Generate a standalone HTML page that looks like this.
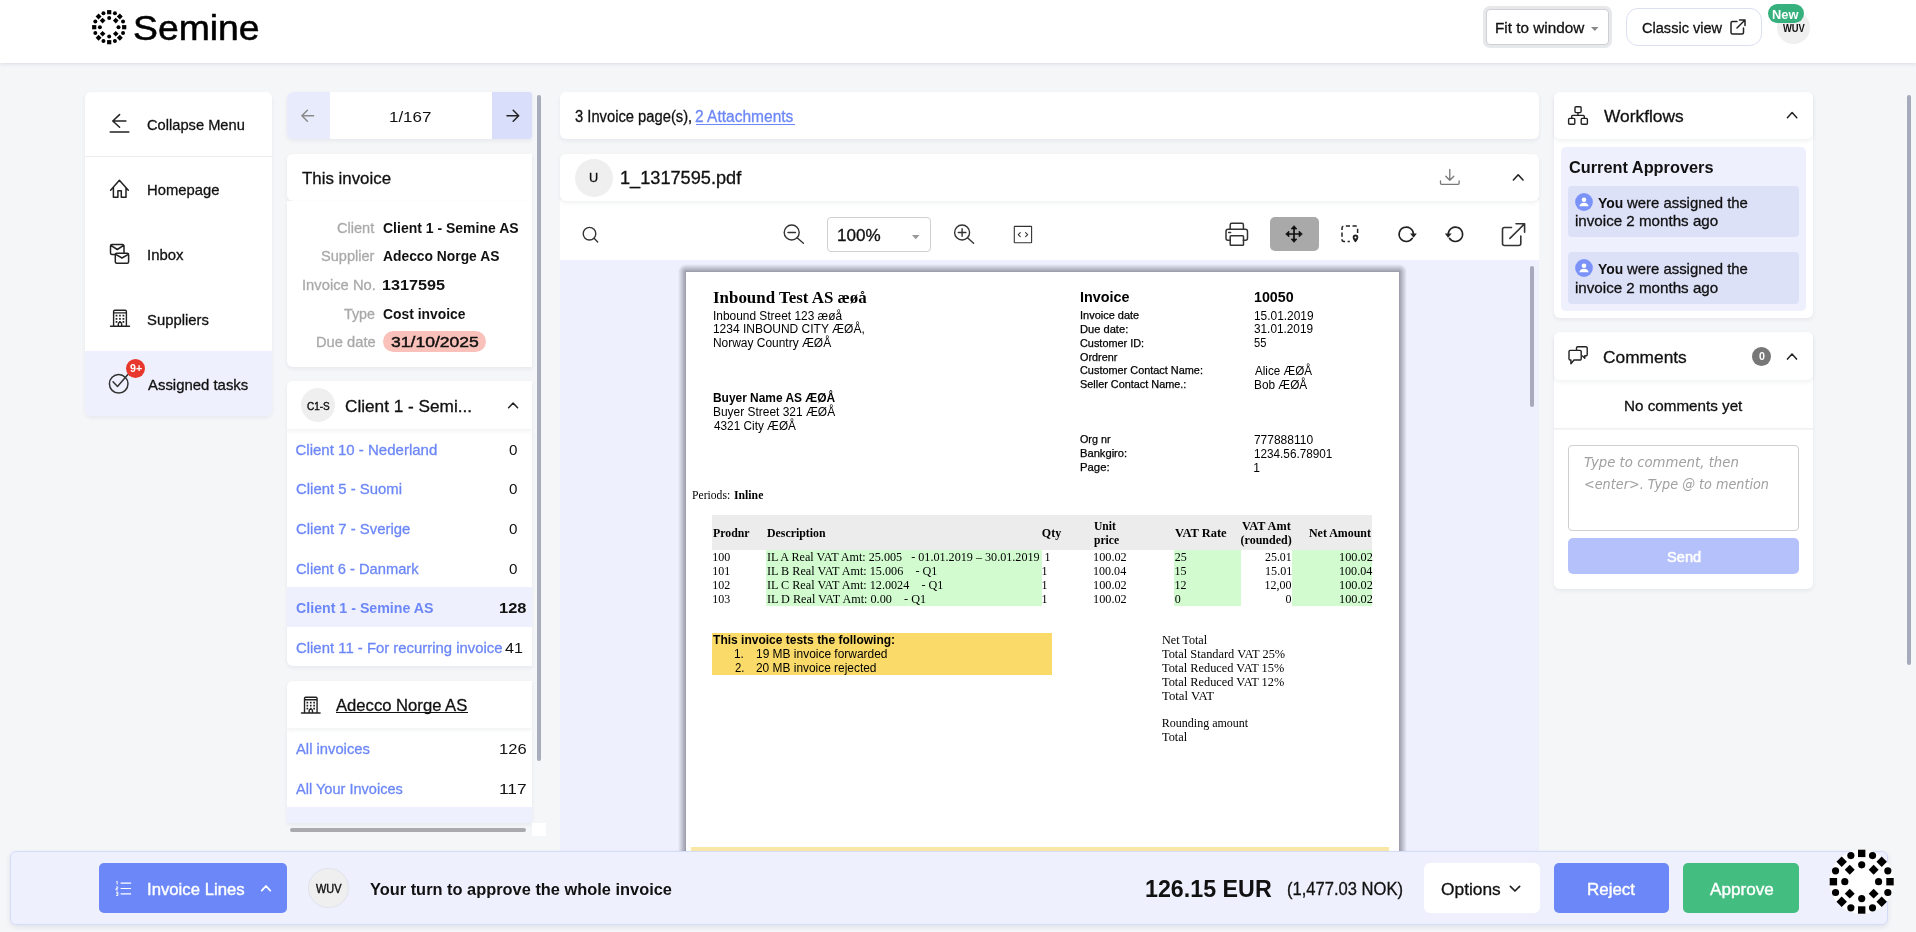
<!DOCTYPE html>
<html lang="en">
<head>
<meta charset="utf-8">
<title>Semine</title>
<style>
*{box-sizing:border-box;margin:0;padding:0}
html,body{width:1916px;height:932px;overflow:hidden}
body{position:relative;background:#f5f6f8;font-family:"Liberation Sans",sans-serif;color:#111;font-size:16px}
.abs{position:absolute}
.t{position:absolute;white-space:nowrap;line-height:1;transform-origin:0 0}
.card{position:absolute;background:#fff;border-radius:6px;box-shadow:0 2px 4px rgba(40,50,90,.07)}
svg{position:absolute;overflow:visible}
.ico{fill:none;stroke:#222;stroke-width:1.5;stroke-linecap:round;stroke-linejoin:round}
.lk{color:#6c87f7}
.u{-webkit-text-stroke:0.3px currentColor}
#root{position:absolute;left:0;top:0;width:1916px;height:932px;will-change:transform}
</style>
</head>
<body>
<div id="root">
<!-- header -->
<div class="abs" style="left:0px;top:0px;width:1916px;height:63px;background:#fff;box-shadow:0 1px 4px rgba(30,40,80,.13)"></div>
<svg style="left:89.8px;top:7.900000000000002px" width="38.4" height="38.4" viewBox="-19.2 -19.2 38.4 38.4" fill="#000"><rect x="-2.10" y="-2.10" width="4.2" height="4.2" transform="translate(0.00 -15.00) rotate(0.0)"/><circle cx="5.74" cy="-13.86" r="2.0"/><rect x="-2.10" y="-2.10" width="4.2" height="4.2" transform="translate(10.61 -10.61) rotate(45.0)"/><circle cx="13.86" cy="-5.74" r="2.0"/><rect x="-2.10" y="-2.10" width="4.2" height="4.2" transform="translate(15.00 -0.00) rotate(90.0)"/><circle cx="13.86" cy="5.74" r="2.0"/><rect x="-2.10" y="-2.10" width="4.2" height="4.2" transform="translate(10.61 10.61) rotate(135.0)"/><circle cx="5.74" cy="13.86" r="2.0"/><rect x="-2.10" y="-2.10" width="4.2" height="4.2" transform="translate(0.00 15.00) rotate(180.0)"/><circle cx="-5.74" cy="13.86" r="2.0"/><rect x="-2.10" y="-2.10" width="4.2" height="4.2" transform="translate(-10.61 10.61) rotate(225.0)"/><circle cx="-13.86" cy="5.74" r="2.0"/><rect x="-2.10" y="-2.10" width="4.2" height="4.2" transform="translate(-15.00 0.00) rotate(270.0)"/><circle cx="-13.86" cy="-5.74" r="2.0"/><rect x="-2.10" y="-2.10" width="4.2" height="4.2" transform="translate(-10.61 -10.61) rotate(315.0)"/><circle cx="-5.74" cy="-13.86" r="2.0"/><circle cx="0.00" cy="-9.30" r="2.0"/><rect x="-1.99" y="-1.99" width="3.99" height="3.99" transform="translate(6.58 -6.58) rotate(45)"/><circle cx="9.30" cy="-0.00" r="2.0"/><rect x="-1.99" y="-1.99" width="3.99" height="3.99" transform="translate(6.58 6.58) rotate(45)"/><circle cx="0.00" cy="9.30" r="2.0"/><rect x="-1.99" y="-1.99" width="3.99" height="3.99" transform="translate(-6.58 6.58) rotate(45)"/><circle cx="-9.30" cy="0.00" r="2.0"/><rect x="-1.99" y="-1.99" width="3.99" height="3.99" transform="translate(-6.58 -6.58) rotate(45)"/></svg>
<div class="t" style="left:132.8px;top:11px;font-size:35.5px;color:#000;transform:scaleX(1.0516);-webkit-text-stroke:0.55px #000;">Semine</div>
<div class="abs" style="left:1486px;top:9px;width:123px;height:36px;background:#fff;border:1px solid #cfcfd4;border-radius:4px;box-shadow:0 0 0 3px #e6e8ea"></div>
<div class="t u" style="left:1495.4px;top:20px;font-size:15.5px;transform:scaleX(0.9863);">Fit to window</div>
<svg style="left:1590.5px;top:26.5px" width="7.5" height="4"><path d="M0 0h7.5L3.75 4z" fill="#888"/></svg>
<div class="abs" style="left:1626px;top:8px;width:136px;height:38px;background:#fff;border:1px solid #dcdff0;border-radius:12px"></div>
<div class="t u" style="left:1641.5px;top:20px;font-size:15.5px;transform:scaleX(0.9395);">Classic view</div>
<svg class="ico" style="left:1730px;top:19px" width="16" height="16" viewBox="0 0 16 16"><path d="M7 2.5H2.5a1.5 1.5 0 0 0-1.5 1.5v9.5A1.5 1.5 0 0 0 2.5 15H12a1.5 1.5 0 0 0 1.5-1.5V9M9.5 1H15v5.5M15 1 7 9"/></svg>
<div class="abs" style="left:1777px;top:11.2px;width:32.8px;height:32.8px;background:#efefef;border-radius:50%"></div>
<div class="t" style="left:1782.7px;top:23px;font-size:11.5px;font-weight:700;transform:scaleX(0.8150);">WUV</div>
<div class="abs" style="left:1768px;top:4px;width:36px;height:19px;background:#36b07d;border-radius:10px"></div>
<div class="t" style="left:1772.4px;top:8px;font-size:13.5px;font-weight:700;color:#fff;transform:scaleX(0.9495);">New</div>
<!-- sidebar -->
<div class="card" style="left:85px;top:92px;width:187px;height:323.5px;overflow:hidden"><div class="abs" style="left:0;top:64px;width:187px;height:1px;background:#ececf0"></div><div class="abs" style="left:0;top:259px;width:187px;height:65px;background:#eef0fd"></div></div>
<div class="t u" style="left:147.1px;top:117px;font-size:15px;color:#111;transform:scaleX(0.9776);">Collapse Menu</div>
<div class="t u" style="left:146.6px;top:182px;font-size:15px;color:#111;transform:scaleX(0.9860);">Homepage</div>
<div class="t u" style="left:146.6px;top:247px;font-size:15px;color:#111;transform:scaleX(0.9937);">Inbox</div>
<div class="t u" style="left:147.3px;top:312px;font-size:15px;color:#111;transform:scaleX(0.9887);">Suppliers</div>
<div class="t u" style="left:147.8px;top:377px;font-size:15px;color:#111;transform:scaleX(0.9939);">Assigned tasks</div>
<svg class="ico" style="left:100px;top:105px" width="40" height="40" viewBox="100 105 40 40"><path d="M125.9 121h-13.2M119.6 114.6l-6.8 6.4 6.8 6.3M110.2 132h18.6"/></svg>
<svg class="ico" style="left:100px;top:170px" width="40" height="40" viewBox="100 170 40 40"><path d="M110.6 190.3l8.8-10 8.9 10M113.4 187.6v9.6h4.5v-6.5h3.4v6.5h4.7v-9.6"/></svg>
<svg class="ico" style="left:100px;top:235px" width="40" height="40" viewBox="100 235 40 40"><path d="M115 254.6h-3a1.5 1.5 0 0 1-1.5-1.5v-7a1.5 1.5 0 0 1 1.5-1.5h10.500a1.500 1.500 0 0 1 1.500 1.500v6.500M110.800 245.300l6.500 4.200 6.400-4.200"/><rect x="115.300" y="253.300" width="13.300" height="10" rx="1.500"/><path d="M115.600 254.300l6.400 3.700 6.300-3.700"/></svg>
<svg class="ico" style="left:109.6px;top:308px;stroke-width:1.40;" width="20.0" height="20.0" viewBox="0 0 20 20"><path d="M0.500 18.300h19M3.600 18.300v-14.800a1.200 1.200 0 0 1 1.200-1.200h10.400a1.200 1.200 0 0 1 1.200 1.200v14.800M3.600 4.900h12.800M8.300 18.300v-2.200a1.700 1.700 0 0 1 3.400 0v2.200"/><path stroke-width="1.70" stroke-linecap="butt" stroke-dasharray="1.700 1.750" d="M5.650 7.700h9M5.650 10.800h9M5.650 13.900h9"/></svg>
<svg class="ico" style="left:100px;top:355px;stroke:#333" width="40" height="40" viewBox="100 355 40 40"><circle cx="118.700" cy="383.800" r="9.300"/><path d="M113 381.700l4.500 4.700 10.800-12.300"/></svg>
<div class="abs" style="left:126px;top:359px;width:19px;height:19px;background:#e8382d;border-radius:50%"></div>
<div class="t" style="left:129.7px;top:363px;font-size:11.5px;font-weight:700;color:#fff;transform:scaleX(0.9280);">9+</div>
<!-- left column -->
<div class="card" style="left:287px;top:92px;width:245px;height:47px;overflow:hidden;border-radius:6px 3px 3px 6px"><div class="abs" style="left:0;top:0;width:42.5px;height:47px;background:#e8ebfc"></div><div class="abs" style="left:204.500px;top:0;width:40px;height:47px;background:#d9defa"></div></div>
<svg class="ico" style="left:295px;top:105px;stroke:#8a8a8a" width="24" height="22" viewBox="295 105 24 22"><path d="M313.600 115.800h-11.300M307.400 110.300l-5.500 5.500 5.500 5.500"/></svg>
<svg class="ico" style="left:500px;top:105px;stroke:#222" width="24" height="22" viewBox="500 105 24 22"><path d="M507 115.800h11.300M513.200 110.300l5.500 5.500-5.500 5.500"/></svg>
<div class="t" style="left:389.1px;top:109px;font-size:15px;transform:scaleX(1.1281);-webkit-text-stroke:0;">1/167</div>
<div class="card" style="left:287px;top:154px;width:245px;height:47px;border-radius:6px 0 0 6px"></div>
<div class="t u" style="left:301.5px;top:170px;font-size:16.5px;transform:scaleX(1.0222);">This invoice</div>
<div class="card" style="left:287px;top:201px;width:245px;height:165.5px;border-radius:0 0 0 6px"></div>
<div class="t u" style="left:337.3px;top:220px;font-size:15px;color:#a9a9a9;transform:scaleX(0.9709);">Client</div>
<div class="t" style="left:382.9px;top:220px;font-size:15px;font-weight:700;transform:scaleX(0.9331);">Client 1 - Semine AS</div>
<div class="t u" style="left:321.2px;top:248px;font-size:15px;color:#a9a9a9;transform:scaleX(0.9708);">Supplier</div>
<div class="t" style="left:383.1px;top:248px;font-size:15px;font-weight:700;transform:scaleX(0.9225);">Adecco Norge AS</div>
<div class="t u" style="left:302.0px;top:277px;font-size:15px;color:#a9a9a9;transform:scaleX(0.9847);">Invoice No.</div>
<div class="t" style="left:382.3px;top:277px;font-size:15px;font-weight:700;transform:scaleX(1.0791);">1317595</div>
<div class="t u" style="left:344.2px;top:306px;font-size:15px;color:#a9a9a9;transform:scaleX(0.9534);">Type</div>
<div class="t" style="left:382.9px;top:306px;font-size:15px;font-weight:700;transform:scaleX(0.9248);">Cost invoice</div>
<div class="t u" style="left:315.6px;top:334px;font-size:15px;color:#a9a9a9;transform:scaleX(0.9797);">Due date</div>
<div class="abs" style="left:383px;top:331px;width:103px;height:21px;background:#f9c1ba;border-radius:10.500px"></div>
<div class="t" style="left:390.5px;top:334px;font-size:15px;transform:scaleX(1.1703);-webkit-text-stroke:0.45px #111;">31/10/2025</div>
<div class="card" style="left:287px;top:381px;width:245px;height:48px;border-radius:6px 0 0 0;z-index:2"></div>
<div class="abs" style="left:300.5px;top:388px;width:34px;height:34px;background:#efefef;border-radius:50%;z-index:2"></div>
<div class="t" style="left:306.7px;top:401px;font-size:10.5px;transform:scaleX(0.9478);z-index:2;-webkit-text-stroke:0.4px #111;">C1-S</div>
<div class="t u" style="left:345.1px;top:398px;font-size:16.5px;transform:scaleX(1.0419);z-index:2;">Client 1 - Semi...</div>
<svg class="ico" style="left:506px;top:400px;z-index:2" width="14" height="10" viewBox="0 0 14 10"><path d="M2.600 7.800l4.500-4.700 4.500 4.700"/></svg>
<div class="card" style="left:287px;top:429px;width:245px;height:237px;border-radius:0 0 0 6px"><div class="abs" style="left:0;top:158px;width:244.500px;height:39.700px;background:#eef0fd"></div></div>
<div class="t u" style="left:295.5px;top:442px;font-size:15px;color:#6c87f7;">Client 10 - Nederland</div>
<div class="t" style="left:508.5px;top:442px;font-size:15.5px;transform:scaleX(0.9806);-webkit-text-stroke:0;">0</div>
<div class="t u" style="left:295.5px;top:481px;font-size:15px;color:#6c87f7;transform:scaleX(0.9941);">Client 5 - Suomi</div>
<div class="t" style="left:508.5px;top:481px;font-size:15.5px;transform:scaleX(0.9806);-webkit-text-stroke:0;">0</div>
<div class="t u" style="left:295.5px;top:521px;font-size:15px;color:#6c87f7;transform:scaleX(0.9935);">Client 7 - Sverige</div>
<div class="t" style="left:508.5px;top:521px;font-size:15.5px;transform:scaleX(0.9806);-webkit-text-stroke:0;">0</div>
<div class="t u" style="left:295.5px;top:561px;font-size:15px;color:#6c87f7;transform:scaleX(0.9802);">Client 6 - Danmark</div>
<div class="t" style="left:508.5px;top:561px;font-size:15.5px;transform:scaleX(0.9806);-webkit-text-stroke:0;">0</div>
<div class="t" style="left:295.8px;top:600px;font-size:15px;font-weight:700;color:#6c87f7;transform:scaleX(0.9462);">Client 1 - Semine AS</div>
<div class="t" style="left:499.0px;top:600px;font-size:15.5px;font-weight:700;transform:scaleX(1.0609);">128</div>
<div class="t u" style="left:295.5px;top:640px;font-size:15px;color:#6c87f7;transform:scaleX(0.9926);">Client 11 - For recurring invoice</div>
<div class="t" style="left:504.7px;top:640px;font-size:15.5px;transform:scaleX(1.0385);-webkit-text-stroke:0;">41</div>
<div class="card" style="left:287px;top:681px;width:245px;height:47px;border-radius:6px 0 0 0;z-index:2"></div>
<svg class="ico" style="left:301px;top:694.5px;stroke-width:1.43;z-index:2;" width="19.6" height="19.6" viewBox="0 0 20 20"><path d="M0.500 18.300h19M3.600 18.300v-14.800a1.200 1.200 0 0 1 1.200-1.200h10.400a1.200 1.200 0 0 1 1.200 1.200v14.800M3.600 4.900h12.800M8.300 18.300v-2.200a1.700 1.700 0 0 1 3.400 0v2.200"/><path stroke-width="1.73" stroke-linecap="butt" stroke-dasharray="1.700 1.750" d="M5.650 7.700h9M5.650 10.800h9M5.650 13.900h9"/></svg>
<!-- z -->
<div class="t u" style="left:336.2px;top:697px;font-size:16.5px;transform:scaleX(1.0080);z-index:2;">Adecco Norge AS</div>
<div class="abs" style="left:335.5px;top:712.3px;width:132.8px;height:1.2px;background:#111;z-index:2"></div>
<div class="card" style="left:287px;top:728px;width:245px;height:95px;border-radius:0;overflow:hidden"><div class="abs" style="left:0;top:79px;width:244.500px;height:16px;background:#eef0fd"></div></div>
<div class="t u" style="left:296.2px;top:741px;font-size:15px;color:#6c87f7;transform:scaleX(0.9844);">All invoices</div>
<div class="t" style="left:499.0px;top:741px;font-size:15.5px;transform:scaleX(1.0674);-webkit-text-stroke:0;">126</div>
<div class="t u" style="left:296.2px;top:781px;font-size:15px;color:#6c87f7;transform:scaleX(0.9702);">All Your Invoices</div>
<div class="t" style="left:498.9px;top:781px;font-size:15.5px;transform:scaleX(1.1205);-webkit-text-stroke:0;">117</div>
<div class="abs" style="left:537.2px;top:94.5px;width:3.6px;height:666px;background:#a9acbb;border-radius:2px"></div>
<div class="abs" style="left:290px;top:827.8px;width:236px;height:4.2px;background:#a9a9ae;border-radius:2px"></div>
<div class="abs" style="left:532px;top:822.8px;width:14px;height:13.6px;background:#fff"></div>
<!-- center -->
<div class="card" style="left:560px;top:92px;width:979px;height:47px;"></div>
<div class="t u" style="left:575.1px;top:109px;font-size:16px;transform:scaleX(0.9212);">3 Invoice page(s),</div>
<div class="t u" style="left:695.3px;top:109px;font-size:16px;color:#6c87f7;transform:scaleX(0.9701);">2 Attachments</div>
<div class="abs" style="left:695.5px;top:123.5px;width:99px;height:1px;background:#6c87f7"></div>
<div class="abs" style="left:560px;top:200px;width:979px;height:651px;background:#fff"></div>
<div class="abs" style="left:560px;top:260px;width:979px;height:591px;background:#eef0fd"></div>
<div class="card" style="left:560px;top:154px;width:979px;height:47px;"></div>
<div class="abs" style="left:575px;top:158.5px;width:38px;height:38px;background:#efefef;border-radius:50%"></div>
<div class="t u" style="left:589.2px;top:172px;font-size:12.5px;transform:scaleX(1.0140);">U</div>
<div class="t u" style="left:620.0px;top:170px;font-size:17.5px;transform:scaleX(1.0376);">1_1317595.pdf</div>
<svg class="ico" style="left:1438px;top:165px;stroke:#777;stroke-width:1.3" width="24" height="24" viewBox="1438 165 24 24"><path d="M1449.800 169.500v10.500M1445.800 176.300l4 4 4-4M1440.500 180.800v2.500a1 1 0 0 0 1 1h16.600a1 1 0 0 0 1-1v-2.500"/></svg>
<svg class="ico" style="left:1510.500px;top:172px;stroke-width:1.6" width="14" height="10" viewBox="0 0 14 10"><path d="M2.400 8l4.800-5.200 4.800 5.200"/></svg>
<svg class="ico" style="left:580px;top:224px;stroke:#333;stroke-width:1.4" width="20" height="20" viewBox="580 224 20 20"><circle cx="589.500" cy="233.700" r="6.300"/><path d="M594.100 238.300l3.600 3.600"/></svg>
<svg class="ico" style="left:782px;top:222px;stroke:#333;stroke-width:1.4" width="24" height="24" viewBox="782 222 24 24"><circle cx="791.700" cy="232.500" r="7.500"/><path d="M797.100 237.800l6.300 5.500M788 232.500h7.500"/></svg>
<div class="abs" style="left:827.2px;top:217.2px;width:103.8px;height:34.6px;background:#fff;border:1px solid #d0d0d0;border-radius:4px"></div>
<div class="t u" style="left:837.0px;top:228px;font-size:16px;transform:scaleX(1.0673);">100%</div>
<svg style="left:912px;top:234.500px" width="7.500" height="4.300"><path d="M0 0h7.500L3.750 4.300z" fill="#999"/></svg>
<svg class="ico" style="left:952px;top:222px;stroke:#333;stroke-width:1.4" width="24" height="24" viewBox="952 222 24 24"><circle cx="962.100" cy="232.500" r="7.500"/><path d="M967.500 237.800l6.100 5.500M958.300 232.500h7.600M962.100 228.700v7.600"/></svg>
<svg class="ico" style="left:1012px;top:224px;stroke:#333;stroke-width:1.100" width="22" height="20" viewBox="1012 224 22 20"><rect x="1014.300" y="226.400" width="17.300" height="16.300" rx="0.500"/><path d="M1020.300 232.600l-2.100 2 2.100 2M1025.600 232.600l2.100 2-2.100 2"/></svg>
<svg class="ico" style="left:1222px;top:220px;stroke:#333;stroke-width:1.500" width="28" height="28" viewBox="1222 220 28 28"><path d="M1230.200 229.300v-4.600a1.500 1.500 0 0 1 1.500-1.500h10.200a1.500 1.500 0 0 1 1.500 1.500v4.600M1230.200 240.300h-2.200a2 2 0 0 1-2-2v-6.800a2.200 2.200 0 0 1 2.200-2.200h17.100a2.200 2.200 0 0 1 2.200 2.200v6.800a2 2 0 0 1-2 2h-2.200M1228.600 232.400h2"/><rect x="1230.200" y="235.800" width="13.300" height="9.500" rx="0.800"/></svg>
<div class="abs" style="left:1270px;top:217px;width:49px;height:34px;background:#a9a9a9;border-radius:5px"></div>
<svg style="left:1284px;top:224px" width="20" height="20" viewBox="-10 -10 20 20" fill="none" stroke="#111" stroke-width="1.700"><path d="M-6.300 0h12.600M0 -6.300v12.600"/><path fill="#111" stroke-width="0.600" stroke-linejoin="round" d="M0 -8.400l3 3.400h-6zM0 8.400l3-3.400h-6zM-8.400 0l3.400-3v6zM8.400 0l-3.400-3v6z"/></svg>
<svg style="left:1338px;top:222px" width="24" height="24" viewBox="1338 222 24 24" fill="none" stroke="#222" stroke-width="1.500"><path d="M1349.800 241.400h-6a1.800 1.800 0 0 1-1.800-1.800v-11.700a1.800 1.800 0 0 1 1.800-1.800h12a1.800 1.800 0 0 1 1.800 1.800v5.600" stroke-dasharray="4.200 2.500" stroke-dashoffset="2"/><path fill="#222" stroke="none" d="M1355.500 234.600a2.800 2.800 0 0 0-2.800 2.800c0 2.100 2.800 5 2.800 5s2.800-2.900 2.800-5a2.800 2.800 0 0 0-2.800-2.800zm0 3.800a1 1 0 1 1 0-2 1 1 0 0 1 0 2z"/></svg>
<svg style="left:1394px;top:222px" width="24" height="24" viewBox="1394 222 24 24" fill="none" stroke="#222" stroke-width="1.600" stroke-linecap="round"><path d="M1412.300 238.300a7.200 7.200 0 1 1 1.200-4.200"/><path fill="#222" stroke="none" d="M1410 233.600h6.800l-3.200 4.200z"/></svg>
<svg style="left:1443px;top:222px" width="24" height="24" viewBox="1443 222 24 24" fill="none" stroke="#222" stroke-width="1.600" stroke-linecap="round"><path d="M1449.400 238.300a7.200 7.200 0 1 0-1.200-4.200"/><path fill="#222" stroke="none" d="M1451.700 233.600h-6.800l3.200 4.200z"/></svg>
<svg class="ico" style="left:1500px;top:220px;stroke:#333;stroke-width:1.600" width="28" height="28" viewBox="1500 220 28 28"><path d="M1511.500 227.500h-7a2 2 0 0 0-2 2v14a2 2 0 0 0 2 2h14.300a2 2 0 0 0 2-2v-7.500M1516 223.700h8.600v8.600M1524.400 223.900l-14.500 14.500"/></svg>
<div class="abs" style="left:1530.2px;top:266px;width:3.5px;height:141px;background:#a7aaba;border-radius:2px"></div>
<!-- pdf page -->
<div class="abs" style="left:560px;top:260px;width:979px;height:591px;overflow:hidden">
<div class="abs" style="left:126px;top:11.8px;width:713.2px;height:700px;background:#fff"></div>
<div class="abs" style="left:118px;top:11.8px;width:8px;height:700px;background:linear-gradient(to left,rgba(0,0,15,.36),rgba(0,0,15,0))"></div>
<div class="abs" style="left:839.2px;top:11.8px;width:8px;height:700px;background:linear-gradient(to right,rgba(0,0,15,.36),rgba(0,0,15,0))"></div>
<div class="abs" style="left:126px;top:3.8000000000000007px;width:713.2px;height:8px;background:linear-gradient(to top,rgba(0,0,15,.36),rgba(0,0,15,0))"></div>
<div class="abs" style="left:118px;top:3.8000000000000007px;width:8px;height:8px;background:radial-gradient(circle at 100% 100%,rgba(0,0,15,.36),rgba(0,0,15,0) 8px)"></div>
<div class="abs" style="left:839.2px;top:3.8000000000000007px;width:8px;height:8px;background:radial-gradient(circle at 0 100%,rgba(0,0,15,.36),rgba(0,0,15,0) 8px)"></div>
</div>
<div class="t pdf" style="left:713.3px;top:290px;font-size:16.5px;font-weight:700;color:#000;font-family:'Liberation Serif',serif;transform:scaleX(1.0249);">Inbound Test AS æøå</div>
<div class="t pdf" style="left:712.7px;top:310px;font-size:12px;color:#000;transform:scaleX(0.9920);">Inbound Street 123 æøå</div>
<div class="t pdf" style="left:712.9px;top:323px;font-size:12px;color:#000;">1234 INBOUND CITY ÆØÅ,</div>
<div class="t pdf" style="left:712.8px;top:337px;font-size:12px;color:#000;transform:scaleX(0.9952);">Norway Country ÆØÅ</div>
<div class="t pdf" style="left:713.0px;top:392px;font-size:12px;font-weight:700;color:#000;transform:scaleX(0.9937);">Buyer Name AS ÆØÅ</div>
<div class="t pdf" style="left:712.8px;top:406px;font-size:12px;color:#000;transform:scaleX(0.9951);">Buyer Street 321 ÆØÅ</div>
<div class="t pdf" style="left:713.5px;top:420px;font-size:12px;color:#000;transform:scaleX(0.9828);">4321 City ÆØÅ</div>
<div class="t pdf" style="left:1079.8px;top:290px;font-size:14.5px;font-weight:700;color:#000;transform:scaleX(0.9919);">Invoice</div>
<div class="t pdf" style="left:1253.6px;top:290px;font-size:14.5px;font-weight:700;color:#000;transform:scaleX(0.9838);">10050</div>
<div class="t pdf" style="left:1079.6px;top:310px;font-size:10.5px;color:#000;transform:scaleX(1.0459);-webkit-text-stroke:0.25px #000;">Invoice date</div>
<div class="t pdf" style="left:1079.7px;top:324px;font-size:10.5px;color:#000;transform:scaleX(1.0595);-webkit-text-stroke:0.25px #000;">Due date:</div>
<div class="t pdf" style="left:1080.1px;top:338px;font-size:10.5px;color:#000;transform:scaleX(1.0371);-webkit-text-stroke:0.25px #000;">Customer ID:</div>
<div class="t pdf" style="left:1080.2px;top:352px;font-size:10.5px;color:#000;transform:scaleX(1.0307);-webkit-text-stroke:0.25px #000;">Ordrenr</div>
<div class="t pdf" style="left:1080.1px;top:365px;font-size:10.5px;color:#000;transform:scaleX(1.0378);-webkit-text-stroke:0.25px #000;">Customer Contact Name:</div>
<div class="t pdf" style="left:1080.1px;top:379px;font-size:10.5px;color:#000;transform:scaleX(1.0358);-webkit-text-stroke:0.25px #000;">Seller Contact Name.:</div>
<div class="t pdf" style="left:1080.2px;top:434px;font-size:10.5px;color:#000;transform:scaleX(1.0243);-webkit-text-stroke:0.25px #000;">Org nr</div>
<div class="t pdf" style="left:1079.7px;top:448px;font-size:10.5px;color:#000;transform:scaleX(1.0629);-webkit-text-stroke:0.25px #000;">Bankgiro:</div>
<div class="t pdf" style="left:1079.7px;top:462px;font-size:10.5px;color:#000;transform:scaleX(1.0778);-webkit-text-stroke:0.25px #000;">Page:</div>
<div class="t pdf" style="left:1253.6px;top:310px;font-size:12px;color:#000;transform:scaleX(0.9905);">15.01.2019</div>
<div class="t pdf" style="left:1254.0px;top:323px;font-size:12px;color:#000;transform:scaleX(0.9830);">31.01.2019</div>
<div class="t pdf" style="left:1254.0px;top:337px;font-size:12px;color:#000;transform:scaleX(0.9240);">55</div>
<div class="t pdf" style="left:1254.5px;top:365px;font-size:12px;color:#000;transform:scaleX(0.9711);">Alice ÆØÅ</div>
<div class="t pdf" style="left:1253.5px;top:379px;font-size:12px;color:#000;transform:scaleX(0.9851);">Bob ÆØÅ</div>
<div class="t pdf" style="left:1253.9px;top:434px;font-size:12px;color:#000;">777888110</div>
<div class="t pdf" style="left:1253.6px;top:448px;font-size:12px;color:#000;transform:scaleX(0.9780);">1234.56.78901</div>
<div class="t pdf" style="left:1253.2px;top:462px;font-size:12px;color:#000;">1</div>
<div class="t pdf" style="left:691.9px;top:489px;font-size:12px;color:#000;font-family:'Liberation Serif',serif;transform:scaleX(0.9706);">Periods:</div>
<div class="t pdf" style="left:734.3px;top:489px;font-size:12px;font-weight:700;color:#000;font-family:'Liberation Serif',serif;transform:scaleX(0.9777);">Inline</div>
<div class="abs" style="left:712.2px;top:515.4px;width:660px;height:34.6px;background:#ececec"></div>
<div class="abs" style="left:766px;top:550px;width:276.1px;height:55.8px;background:#d2fcd0"></div>
<div class="abs" style="left:1174px;top:550px;width:66.7px;height:55.8px;background:#d2fcd0"></div>
<div class="abs" style="left:1291.8px;top:550px;width:80.4px;height:55.8px;background:#d2fcd0"></div>
<div class="t pdf" style="left:712.7px;top:527px;font-size:12px;font-weight:700;color:#000;font-family:'Liberation Serif',serif;transform:scaleX(0.9835);">Prodnr</div>
<div class="t pdf" style="left:766.7px;top:527px;font-size:12px;font-weight:700;color:#000;font-family:'Liberation Serif',serif;transform:scaleX(0.9886);">Description</div>
<div class="t pdf" style="left:1041.8px;top:527px;font-size:12px;font-weight:700;color:#000;font-family:'Liberation Serif',serif;">Qty</div>
<div class="t pdf" style="left:1093.5px;top:520px;font-size:12px;font-weight:700;color:#000;font-family:'Liberation Serif',serif;transform:scaleX(0.9645);">Unit</div>
<div class="t pdf" style="left:1093.6px;top:534px;font-size:12px;font-weight:700;color:#000;font-family:'Liberation Serif',serif;transform:scaleX(0.9656);">price</div>
<div class="t pdf" style="left:1174.9px;top:527px;font-size:12px;font-weight:700;color:#000;font-family:'Liberation Serif',serif;transform:scaleX(1.0398);">VAT Rate</div>
<div class="t pdf" style="left:1241.6px;top:520px;font-size:12px;font-weight:700;color:#000;font-family:'Liberation Serif',serif;transform:scaleX(1.0221);">VAT Amt</div>
<div class="t pdf" style="left:1240.6px;top:534px;font-size:12px;font-weight:700;color:#000;font-family:'Liberation Serif',serif;">(rounded)</div>
<div class="t pdf" style="left:1309.3px;top:527px;font-size:12px;font-weight:700;color:#000;font-family:'Liberation Serif',serif;transform:scaleX(0.9941);">Net Amount</div>
<div class="t pdf" style="left:712.2px;top:551px;font-size:12px;color:#000;font-family:'Liberation Serif',serif;">100</div>
<div class="t pdf" style="left:766.5px;top:551px;font-size:12px;color:#000;font-family:'Liberation Serif',serif;transform:scaleX(1.0114);white-space:pre;">IL A Real VAT Amt: 25.005   - 01.01.2019 – 30.01.2019</div>
<div class="t pdf" style="left:1044.4px;top:551px;font-size:12px;color:#000;font-family:'Liberation Serif',serif;">1</div>
<div class="t pdf" style="left:1092.9px;top:551px;font-size:12px;color:#000;font-family:'Liberation Serif',serif;transform:scaleX(1.0217);">100.02</div>
<div class="t pdf" style="left:1174.8px;top:551px;font-size:12px;color:#000;font-family:'Liberation Serif',serif;">25</div>
<div class="t pdf" style="left:1265.2px;top:551px;font-size:12px;color:#000;font-family:'Liberation Serif',serif;transform:scaleX(0.9915);">25.01</div>
<div class="t pdf" style="left:1338.5px;top:551px;font-size:12px;color:#000;font-family:'Liberation Serif',serif;transform:scaleX(1.0249);">100.02</div>
<div class="t pdf" style="left:712.3px;top:565px;font-size:12px;color:#000;font-family:'Liberation Serif',serif;">101</div>
<div class="t pdf" style="left:766.5px;top:565px;font-size:12px;color:#000;font-family:'Liberation Serif',serif;transform:scaleX(1.0151);white-space:pre;">IL B Real VAT Amt: 15.006    - Q1</div>
<div class="t pdf" style="left:1041.5px;top:565px;font-size:12px;color:#000;font-family:'Liberation Serif',serif;">1</div>
<div class="t pdf" style="left:1092.9px;top:565px;font-size:12px;color:#000;font-family:'Liberation Serif',serif;transform:scaleX(1.0057);">100.04</div>
<div class="t pdf" style="left:1174.5px;top:565px;font-size:12px;color:#000;font-family:'Liberation Serif',serif;">15</div>
<div class="t pdf" style="left:1264.6px;top:565px;font-size:12px;color:#000;font-family:'Liberation Serif',serif;transform:scaleX(1.0131);">15.01</div>
<div class="t pdf" style="left:1338.5px;top:565px;font-size:12px;color:#000;font-family:'Liberation Serif',serif;transform:scaleX(1.0088);">100.04</div>
<div class="t pdf" style="left:712.3px;top:579px;font-size:12px;color:#000;font-family:'Liberation Serif',serif;">102</div>
<div class="t pdf" style="left:766.5px;top:579px;font-size:12px;color:#000;font-family:'Liberation Serif',serif;transform:scaleX(1.0146);white-space:pre;">IL C Real VAT Amt: 12.0024    - Q1</div>
<div class="t pdf" style="left:1041.5px;top:579px;font-size:12px;color:#000;font-family:'Liberation Serif',serif;">1</div>
<div class="t pdf" style="left:1092.9px;top:579px;font-size:12px;color:#000;font-family:'Liberation Serif',serif;transform:scaleX(1.0217);">100.02</div>
<div class="t pdf" style="left:1174.6px;top:579px;font-size:12px;color:#000;font-family:'Liberation Serif',serif;">12</div>
<div class="t pdf" style="left:1264.6px;top:579px;font-size:12px;color:#000;font-family:'Liberation Serif',serif;">12,00</div>
<div class="t pdf" style="left:1338.5px;top:579px;font-size:12px;color:#000;font-family:'Liberation Serif',serif;transform:scaleX(1.0249);">100.02</div>
<div class="t pdf" style="left:712.2px;top:593px;font-size:12px;color:#000;font-family:'Liberation Serif',serif;">103</div>
<div class="t pdf" style="left:766.5px;top:593px;font-size:12px;color:#000;font-family:'Liberation Serif',serif;transform:scaleX(1.0158);white-space:pre;">IL D Real VAT Amt: 0.00    - Q1</div>
<div class="t pdf" style="left:1041.5px;top:593px;font-size:12px;color:#000;font-family:'Liberation Serif',serif;">1</div>
<div class="t pdf" style="left:1092.9px;top:593px;font-size:12px;color:#000;font-family:'Liberation Serif',serif;transform:scaleX(1.0217);">100.02</div>
<div class="t pdf" style="left:1174.7px;top:593px;font-size:12px;color:#000;font-family:'Liberation Serif',serif;">0</div>
<div class="t pdf" style="left:1285.5px;top:593px;font-size:12px;color:#000;font-family:'Liberation Serif',serif;">0</div>
<div class="t pdf" style="left:1338.5px;top:593px;font-size:12px;color:#000;font-family:'Liberation Serif',serif;transform:scaleX(1.0249);">100.02</div>
<div class="abs" style="left:712.2px;top:633.2px;width:340.1px;height:41.6px;background:#fadb6a"></div>
<div class="t pdf" style="left:713.1px;top:634px;font-size:12px;font-weight:700;color:#000;">This invoice tests the following:</div>
<div class="t pdf" style="left:734.4px;top:648px;font-size:12px;color:#000;transform:scaleX(0.9821);">1.</div>
<div class="t pdf" style="left:755.9px;top:648px;font-size:12px;color:#000;transform:scaleX(0.9957);">19 MB invoice forwarded</div>
<div class="t pdf" style="left:734.7px;top:662px;font-size:12px;color:#000;transform:scaleX(0.9467);">2.</div>
<div class="t pdf" style="left:756.2px;top:662px;font-size:12px;color:#000;transform:scaleX(0.9926);">20 MB invoice rejected</div>
<div class="t pdf" style="left:1161.8px;top:634px;font-size:12px;color:#000;font-family:'Liberation Serif',serif;transform:scaleX(1.0113);">Net Total</div>
<div class="t pdf" style="left:1161.9px;top:648px;font-size:12px;color:#000;font-family:'Liberation Serif',serif;transform:scaleX(1.0306);">Total Standard VAT 25%</div>
<div class="t pdf" style="left:1161.9px;top:662px;font-size:12px;color:#000;font-family:'Liberation Serif',serif;transform:scaleX(1.0289);">Total Reduced VAT 15%</div>
<div class="t pdf" style="left:1161.9px;top:676px;font-size:12px;color:#000;font-family:'Liberation Serif',serif;transform:scaleX(1.0289);">Total Reduced VAT 12%</div>
<div class="t pdf" style="left:1161.8px;top:690px;font-size:12px;color:#000;font-family:'Liberation Serif',serif;transform:scaleX(1.0591);">Total VAT</div>
<div class="t pdf" style="left:1161.8px;top:717px;font-size:12px;color:#000;font-family:'Liberation Serif',serif;">Rounding amount</div>
<div class="t pdf" style="left:1161.9px;top:731px;font-size:12px;color:#000;font-family:'Liberation Serif',serif;transform:scaleX(1.0261);">Total</div>
<div class="abs" style="left:690.5px;top:847.2px;width:698.5px;height:4px;background:#fbe8a8"></div>
<!-- right column -->
<div class="card" style="left:1554px;top:92px;width:259px;height:226px;"></div>
<div class="card" style="left:1554px;top:92px;width:259px;height:47px;"></div>
<svg class="ico" style="left:1566px;top:104px;stroke:#222;stroke-width:1.400" width="24" height="24" viewBox="1566 104 24 24"><rect x="1575" y="106.800" width="6.100" height="5.800" rx="1"/><rect x="1568.600" y="118.400" width="6.200" height="5.800" rx="1"/><rect x="1581.200" y="118.400" width="6.200" height="5.800" rx="1"/><path d="M1578 112.600v2.800M1571.700 118.400v-2a1 1 0 0 1 1-1h10.600a1 1 0 0 1 1 1v2"/></svg>
<div class="t u" style="left:1603.9px;top:108px;font-size:16.5px;transform:scaleX(1.0508);">Workflows</div>
<svg class="ico" style="left:1784.800px;top:110.400px;stroke-width:1.500" width="14" height="10" viewBox="0 0 14 10"><path d="M2.400 7.800l4.700-5.200 4.700 5.200"/></svg>
<div class="abs" style="left:1561px;top:147px;width:245px;height:164px;background:#eef0fd;border-radius:5px"></div>
<div class="t" style="left:1568.6px;top:160px;font-size:16px;font-weight:700;transform:scaleX(1.0198);">Current Approvers</div>
<div class="abs" style="left:1568px;top:186px;width:231px;height:51px;background:#dde1f8;border-radius:4px"></div>
<svg style="left:1575px;top:193px" width="18" height="18" viewBox="-9 -9 18 18"><circle r="8.900" fill="#7b93f8"/><circle cx="0" cy="-2.300" r="2.300" fill="#fff"/><path d="M-4.600 4.300a4.600 3.600 0 0 1 9.200 0z" fill="#fff"/></svg>
<div class="t" style="left:1597.5px;top:195px;font-size:15px;font-weight:700;transform:scaleX(0.9261);">You</div>
<div class="t u" style="left:1627.2px;top:195px;font-size:15px;transform:scaleX(0.9928);">were assigned the</div>
<div class="t u" style="left:1575.2px;top:213px;font-size:15px;transform:scaleX(1.0099);">invoice 2 months ago</div>
<div class="abs" style="left:1568px;top:252.3px;width:231px;height:51.5px;background:#dde1f8;border-radius:4px"></div>
<svg style="left:1575px;top:259.3px" width="18" height="18" viewBox="-9 -9 18 18"><circle r="8.900" fill="#7b93f8"/><circle cx="0" cy="-2.300" r="2.300" fill="#fff"/><path d="M-4.600 4.300a4.600 3.600 0 0 1 9.200 0z" fill="#fff"/></svg>
<div class="t" style="left:1597.5px;top:261px;font-size:15px;font-weight:700;transform:scaleX(0.9261);">You</div>
<div class="t u" style="left:1627.2px;top:261px;font-size:15px;transform:scaleX(0.9928);">were assigned the</div>
<div class="t u" style="left:1575.2px;top:280px;font-size:15px;transform:scaleX(1.0099);">invoice 2 months ago</div>
<div class="card" style="left:1554px;top:332px;width:259px;height:257px;"></div>
<div class="card" style="left:1554px;top:332px;width:259px;height:48px;"></div>
<svg class="ico" style="left:1566px;top:344px;stroke:#222;stroke-width:1.400" width="24" height="24" viewBox="1566 344 24 24"><path d="M1576.500 350.200v-2.200a1.200 1.200 0 0 1 1.200-1.200h8.300a1.200 1.200 0 0 1 1.200 1.200v6.600a1.200 1.200 0 0 1-1.200 1.200h-1.200v2.400l-2.300-2.300"/><path d="M1570.200 350.400h9.800a1.200 1.200 0 0 1 1.200 1.200v7.200a1.200 1.200 0 0 1-1.200 1.200h-6l-3.100 3.700v-3.700h-0.700a1.200 1.200 0 0 1-1.200-1.200v-7.200a1.200 1.200 0 0 1 1.200-1.200z" fill="#fff"/></svg>
<div class="t u" style="left:1602.9px;top:349px;font-size:16.5px;transform:scaleX(1.0500);">Comments</div>
<div class="abs" style="left:1752px;top:346.9px;width:18.8px;height:18.8px;background:#777;border-radius:50%"></div>
<div class="t" style="left:1758.5px;top:351px;font-size:11px;font-weight:700;color:#fff;transform:scaleX(0.9698);">0</div>
<svg class="ico" style="left:1784.500px;top:350.500px;stroke-width:1.500" width="14" height="10" viewBox="0 0 14 10"><path d="M2.500 8.100l4.500-5 4.500 5"/></svg>
<div class="t u" style="left:1623.9px;top:398px;font-size:15px;transform:scaleX(1.0140);">No comments yet</div>
<div class="abs" style="left:1554px;top:428.3px;width:259px;height:1.5px;background:linear-gradient(#efeff2,#f8f8fa)"></div>
<div class="abs" style="left:1568px;top:445px;width:231px;height:86px;background:#fff;border:1px solid #cfcfcf;border-radius:4px"></div>
<div class="t" style="left:1584.0px;top:455px;font-size:14px;color:#a0a0a0;font-family:'DejaVu Sans',sans-serif;transform:scaleX(0.9481);font-style:italic;">Type to comment, then</div>
<div class="t" style="left:1584.0px;top:477px;font-size:14px;color:#a0a0a0;font-family:'DejaVu Sans',sans-serif;transform:scaleX(0.9150);font-style:italic;">&lt;enter&gt;. Type @ to mention</div>
<div class="abs" style="left:1568px;top:538px;width:231px;height:36px;background:#b5c1fb;border-radius:5px"></div>
<div class="t" style="left:1666.5px;top:549px;font-size:15px;color:#fff;transform:scaleX(0.9757);-webkit-text-stroke:0.5px #fff;">Send</div>
<div class="abs" style="left:1907.3px;top:94.5px;width:3.6px;height:570px;background:#a7aabb;border-radius:2px"></div>
<!-- bottom bar -->
<div class="abs" style="left:10px;top:851px;width:1877.5px;height:73.5px;background:#eef0fd;border:1px solid #d5dcfa;border-radius:6px;box-shadow:0 2px 5px rgba(40,50,90,.10)"></div>
<div class="abs" style="left:99px;top:863px;width:188px;height:50px;background:#6c88f8;border-radius:5px"></div>
<svg style="left:114px;top:878px" width="20" height="20" viewBox="114 878 20 20" fill="none" stroke="#fff" stroke-width="1.200"><path d="M120.600 883.100h10.500M120.600 888.500h10.500M120.600 893.900h10.500"/><path stroke-width="0.900" d="M116.300 881.700l0.900-0.500v3.400M116 886.900h1.800v1.500h-1.800v1.600h1.900M116 892.200h1.900v3.300h-1.900M116.300 893.800h1.600"/></svg>
<div class="t" style="left:147.2px;top:881px;font-size:16.5px;color:#fff;transform:scaleX(1.0137);-webkit-text-stroke:0.4px #fff;">Invoice Lines</div>
<svg class="ico" style="left:258.500px;top:883px;stroke:#fff;stroke-width:1.800" width="14" height="10" viewBox="0 0 14 10"><path d="M2.700 7.600l4.300-4.600 4.300 4.600"/></svg>
<div class="abs" style="left:308.2px;top:867.6px;width:40.4px;height:40.4px;background:#efefef;border:1px solid #e0e2ee;border-radius:50%"></div>
<div class="t" style="left:315.7px;top:883px;font-size:12px;transform:scaleX(0.9119);-webkit-text-stroke:0.4px #111;">WUV</div>
<div class="t" style="left:370.3px;top:881px;font-size:16.5px;font-weight:700;transform:scaleX(0.9931);">Your turn to approve the whole invoice</div>
<div class="t" style="left:1145.3px;top:878px;font-size:23.5px;font-weight:700;transform:scaleX(0.9896);">126.15 EUR</div>
<div class="t u" style="left:1287.0px;top:881px;font-size:17.5px;transform:scaleX(0.9459);">(1,477.03 NOK)</div>
<div class="abs" style="left:1424px;top:863px;width:115.5px;height:50px;background:#fff;border-radius:6px"></div>
<div class="t u" style="left:1441.3px;top:881px;font-size:16.5px;transform:scaleX(1.0508);">Options</div>
<svg class="ico" style="left:1508px;top:884px;stroke-width:1.700" width="14" height="10" viewBox="0 0 14 10"><path d="M2.400 2.300l4.600 4.700 4.600-4.700"/></svg>
<div class="abs" style="left:1554px;top:863px;width:115px;height:50px;background:#6c88f8;border-radius:5px"></div>
<div class="t" style="left:1587.3px;top:881px;font-size:16.5px;color:#fff;transform:scaleX(1.0256);-webkit-text-stroke:0.4px #fff;">Reject</div>
<div class="abs" style="left:1683px;top:863px;width:116px;height:50px;background:#43be80;border-radius:5px"></div>
<div class="t" style="left:1709.9px;top:881px;font-size:16.5px;color:#fff;transform:scaleX(1.0380);-webkit-text-stroke:0.4px #fff;">Approve</div>
<svg style="left:1826.2px;top:846.3px" width="71.4" height="71.4" viewBox="-35.7 -35.7 71.4 71.4" fill="#000"><circle r="32.2" fill="#fff"/><rect x="-3.70" y="-3.70" width="7.4" height="7.4" transform="translate(0.00 -28.30) rotate(0.0)"/><circle cx="10.83" cy="-26.15" r="3.6"/><rect x="-3.70" y="-3.70" width="7.4" height="7.4" transform="translate(20.01 -20.01) rotate(45.0)"/><circle cx="26.15" cy="-10.83" r="3.6"/><rect x="-3.70" y="-3.70" width="7.4" height="7.4" transform="translate(28.30 -0.00) rotate(90.0)"/><circle cx="26.15" cy="10.83" r="3.6"/><rect x="-3.70" y="-3.70" width="7.4" height="7.4" transform="translate(20.01 20.01) rotate(135.0)"/><circle cx="10.83" cy="26.15" r="3.6"/><rect x="-3.70" y="-3.70" width="7.4" height="7.4" transform="translate(0.00 28.30) rotate(180.0)"/><circle cx="-10.83" cy="26.15" r="3.6"/><rect x="-3.70" y="-3.70" width="7.4" height="7.4" transform="translate(-20.01 20.01) rotate(225.0)"/><circle cx="-26.15" cy="10.83" r="3.6"/><rect x="-3.70" y="-3.70" width="7.4" height="7.4" transform="translate(-28.30 0.00) rotate(270.0)"/><circle cx="-26.15" cy="-10.83" r="3.6"/><rect x="-3.70" y="-3.70" width="7.4" height="7.4" transform="translate(-20.01 -20.01) rotate(315.0)"/><circle cx="-10.83" cy="-26.15" r="3.6"/><circle cx="0.00" cy="-16.90" r="3.6"/><rect x="-3.52" y="-3.52" width="7.03" height="7.03" transform="translate(11.95 -11.95) rotate(45)"/><circle cx="16.90" cy="-0.00" r="3.6"/><rect x="-3.52" y="-3.52" width="7.03" height="7.03" transform="translate(11.95 11.95) rotate(45)"/><circle cx="0.00" cy="16.90" r="3.6"/><rect x="-3.52" y="-3.52" width="7.03" height="7.03" transform="translate(-11.95 11.95) rotate(45)"/><circle cx="-16.90" cy="0.00" r="3.6"/><rect x="-3.52" y="-3.52" width="7.03" height="7.03" transform="translate(-11.95 -11.95) rotate(45)"/></svg>
</div>
</body>
</html>
